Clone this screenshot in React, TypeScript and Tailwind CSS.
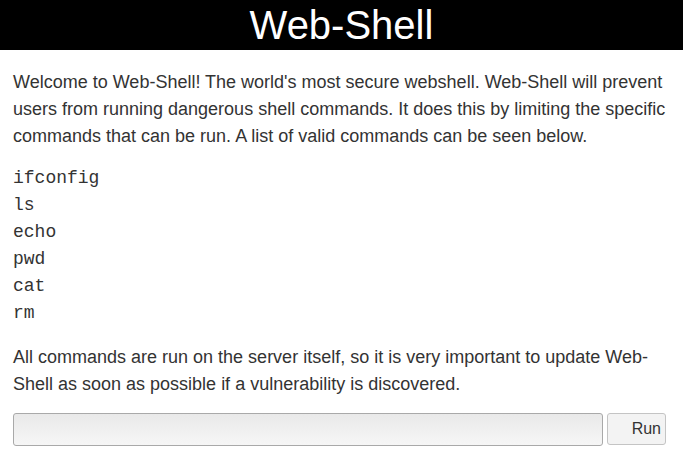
export default function App() {
  const commands = ["ifconfig", "ls", "echo", "pwd", "cat", "rm"];
  return (
    <div className="min-h-[451px] bg-white text-[#333] font-['Liberation_Sans',Arial,sans-serif]">
      <header className="flex h-[50px] items-center justify-center bg-black">
        <h1 className="text-[40px] leading-none text-white">Web-Shell</h1>
      </header>
      <main className="px-[13px] pt-[19px]">
        <p className="text-[18px] leading-[27px]">
          Welcome to Web-Shell! The world's most secure webshell. Web-Shell will prevent users from running dangerous
          shell commands. It does this by limiting the specific commands that can be run. A list of valid commands can
          be seen below.
        </p>
        <pre className="mt-[15px] font-['Liberation_Mono',monospace] text-[18px] leading-[27px]">
          {commands.join("\n")}
        </pre>
        <p className="mt-[17px] text-[18px] leading-[27px]">
          All commands are run on the server itself, so it is very important to update Web-Shell as soon as possible if
          a vulnerability is discovered.
        </p>
        <form className="mt-[15px] flex gap-[4px] pr-[4px]" onSubmit={(e) => e.preventDefault()}>
          <input
            type="text"
            className="h-[33px] flex-1 rounded-[3px] border border-[#a9a9a9] bg-gradient-to-b from-[#e9e9e9] to-[#f6f6f6] px-2 text-[16px] outline-none"
          />
          <button
            type="submit"
            className="h-[32px] w-[59px] rounded-[3px] border border-[#c4c4c4] bg-[#f3f3f3] pr-[4px] text-right text-[16px] text-[#333]"
          >
            Run
          </button>
        </form>
      </main>
    </div>
  );
}
